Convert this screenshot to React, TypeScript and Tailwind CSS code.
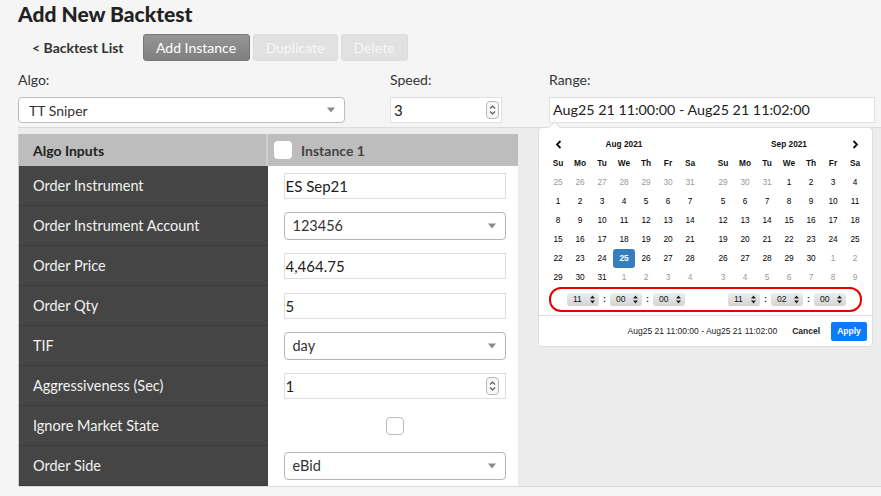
const sans = "font-['Lato','Noto_Sans',sans-serif]";
const cal = "font-['Liberation_Sans','Arial',sans-serif]";

type Field = { label: string; kind: "text" | "select" | "number" | "check"; value?: string };

const fields: Field[] = [
  { label: "Order Instrument", kind: "text", value: "ES Sep21" },
  { label: "Order Instrument Account", kind: "select", value: "123456" },
  { label: "Order Price", kind: "text", value: "4,464.75" },
  { label: "Order Qty", kind: "text", value: "5" },
  { label: "TIF", kind: "select", value: "day" },
  { label: "Aggressiveness (Sec)", kind: "number", value: "1" },
  { label: "Ignore Market State", kind: "check" },
  { label: "Order Side", kind: "select", value: "eBid" },
];

function Caret() {
  return (
    <svg width="10" height="6" viewBox="0 0 10 6" className="shrink-0">
      <path d="M1 0.5h8L5 5.5z" fill="#8a8a8a" />
    </svg>
  );
}

function Spinner() {
  return (
    <span className="flex h-[18px] w-[13px] flex-col items-center justify-center rounded-[4px] border border-[#b9b9b9] bg-[#f7f7f7]">
      <svg width="7" height="12" viewBox="0 0 7 12">
        <path d="M1 4.5L3.5 2L6 4.5M1 7.5L3.5 10L6 7.5" fill="none" stroke="#555" strokeWidth="1.1" />
      </svg>
    </span>
  );
}

function SelectBox({ value, className = "" }: { value: string; className?: string }) {
  return (
    <div
      className={`flex items-center justify-between rounded-[4px] border border-[#b4b4b4] bg-white pl-[8px] pr-[8px] text-[14.5px] text-[#333] ${className}`}
    >
      <span>{value}</span>
      <Caret />
    </div>
  );
}

function TimeSelect({ value }: { value: string }) {
  return (
    <div className="flex h-[13px] w-[32px] items-center justify-between rounded-[3px] bg-gradient-to-b from-[#ededed] to-[#d4d4d4] pl-[6px] pr-[4px] text-[8.5px] leading-none text-[#111]">
      <span>{value}</span>
      <svg width="5" height="9" viewBox="0 0 5 9">
        <path d="M0 3.5L2.5 0.5L5 3.5zM0 5.5L2.5 8.5L5 5.5z" fill="#222" />
      </svg>
    </div>
  );
}

function TimeGroup({ h, m, s }: { h: string; m: string; s: string }) {
  return (
    <div className="flex items-center gap-[4px]">
      <TimeSelect value={h} />
      <span className="text-[9px] font-bold text-[#222]">:</span>
      <TimeSelect value={m} />
      <span className="text-[9px] font-bold text-[#222]">:</span>
      <TimeSelect value={s} />
    </div>
  );
}

type Day = { d: number; off?: boolean; sel?: boolean };

const aug: Day[] = [
  ...[25, 26, 27, 28, 29, 30, 31].map((d) => ({ d, off: true })),
  ...Array.from({ length: 31 }, (_, i) => ({ d: i + 1, sel: i + 1 === 25 })),
  ...[1, 2, 3, 4].map((d) => ({ d, off: true })),
];

const sep: Day[] = [
  ...[29, 30, 31].map((d) => ({ d, off: true })),
  ...Array.from({ length: 30 }, (_, i) => ({ d: i + 1 })),
  ...[1, 2, 3, 4, 5, 6, 7, 8, 9].map((d) => ({ d, off: true })),
];

const dow = ["Su", "Mo", "Tu", "We", "Th", "Fr", "Sa"];

function Month({ title, days, left }: { title: string; days: Day[]; left: boolean }) {
  return (
    <div className="grid grid-cols-[repeat(7,22px)] auto-rows-[19px] text-[8.3px]">
      <div className="flex items-center justify-center">
        {left && (
          <svg width="7" height="9" viewBox="0 0 7 9">
            <path d="M5.5 1L2 4.5 5.5 8" fill="none" stroke="#111" strokeWidth="1.8" />
          </svg>
        )}
      </div>
      <div className="col-span-5 flex items-center justify-center font-bold text-[#111]">{title}</div>
      <div className="flex items-center justify-center">
        {!left && (
          <svg width="7" height="9" viewBox="0 0 7 9">
            <path d="M1.5 1L5 4.5 1.5 8" fill="none" stroke="#111" strokeWidth="1.8" />
          </svg>
        )}
      </div>
      {dow.map((d) => (
        <div key={d} className="flex items-center justify-center font-bold text-[#111]">
          {d}
        </div>
      ))}
      {days.map((x, i) => (
        <div
          key={i}
          className={`flex items-center justify-center ${
            x.sel
              ? "rounded-[3px] bg-[#357ebd] font-bold text-white"
              : x.off
                ? "text-[#999]"
                : "text-[#000]"
          }`}
        >
          {x.d}
        </div>
      ))}
    </div>
  );
}

function RangePicker() {
  return (
    <div className={`absolute left-[-11px] top-[58px] z-10 w-[335px] rounded-[4px] border border-[#ddd] bg-white ${cal}`}>
      <div className="absolute left-[11px] top-[-5px] h-[9px] w-[9px] rotate-45 border-l border-t border-[#ddd] bg-white" />
      <div className="flex gap-[11px] pl-[8px] pt-[7px]">
        <Month title="Aug 2021" days={aug} left />
        <Month title="Sep 2021" days={sep} left={false} />
      </div>
      <div className="mx-[10px] flex h-[25px] items-center justify-between rounded-[12px] border-2 border-[#e60000] pl-[16px] pr-[14px]">
        <TimeGroup h="11" m="00" s="00" />
        <TimeGroup h="11" m="02" s="00" />
      </div>
      <div className="mt-[3px] flex h-[31px] items-center justify-end border-t border-[#ddd] pr-[5px] text-[8.5px]">
        <span className="text-[#222]">Aug25 21 11:00:00 - Aug25 21 11:02:00</span>
        <span className="ml-[15px] font-bold text-[#222]">Cancel</span>
        <span className="ml-[11px] flex h-[19px] w-[36px] items-center justify-center rounded-[2px] bg-[#0a7cf9] font-bold text-white">
          Apply
        </span>
      </div>
    </div>
  );
}

function Control({ f }: { f: Field }) {
  if (f.kind === "select") return <SelectBox value={f.value!} className="h-[28px] w-[222px]" />;
  if (f.kind === "check")
    return (
      <div className="flex w-[222px] justify-center">
        <span className="h-[18px] w-[18px] rounded-[4px] border border-[#bbb] bg-white" />
      </div>
    );
  return (
    <div className="flex h-[26px] w-[222px] items-center justify-between border border-[#dedede] bg-white pl-[1px] pr-[6px] text-[15px] text-[#222]">
      <span>{f.value}</span>
      {f.kind === "number" && <Spinner />}
    </div>
  );
}

export default function App() {
  return (
    <div className={`h-[496px] w-[881px] overflow-hidden bg-[#f5f5f5] ${sans}`}>
      <h1 className="h-[28px] pl-[18px] pt-[1px] text-[21px] font-black leading-[26px] text-[#222]">Add New Backtest</h1>

      <div className="mt-[6px] flex h-[27px] items-center">
        <span className="pl-[32px] pr-[19px] text-[14px] font-bold text-[#333]">&lt; Backtest List</span>
        <button className="h-[27px] w-[107px] rounded-[3px] border border-[#777] bg-gradient-to-b from-[#959595] to-[#808080] text-[14px] text-white">
          Add Instance
        </button>
        <button className="ml-[3px] h-[27px] w-[85px] rounded-[3px] border border-[#dcdcdc] bg-[#e1e1e1] text-[14px] text-[#f7f7f7]">
          Duplicate
        </button>
        <button className="ml-[3px] h-[27px] w-[67px] rounded-[3px] border border-[#dcdcdc] bg-[#e1e1e1] text-[14px] text-[#f7f7f7]">
          Delete
        </button>
      </div>

      <div className="mt-[8px] flex text-[14px] text-[#333]">
        <div className="ml-[18px] w-[327px]">
          <div className="h-[28px] leading-[22px]">Algo:</div>
          <SelectBox value="TT Sniper" className="h-[26px] w-[327px] border-[#bdbdbd] pl-[10px] text-[14px]" />
        </div>
        <div className="ml-[45px] w-[112px]">
          <div className="h-[28px] leading-[22px]">Speed:</div>
          <div className="flex h-[26px] items-center justify-between border border-[#e0e0e0] bg-white pl-[3px] pr-[2px] text-[15px] text-[#222]">
            <span>3</span>
            <Spinner />
          </div>
        </div>
        <div className="relative z-10 ml-[47px] w-[326px]">
          <div className="h-[28px] leading-[22px]">Range:</div>
          <div className="flex h-[26px] items-center border border-[#e0e0e0] bg-white pl-[3px] text-[14.3px] text-[#222]">
            Aug25 21 11:00:00 - Aug25 21 11:02:00
          </div>
          <RangePicker />
        </div>
      </div>

      <div className="ml-[18px] mt-[4px] h-[360px] border-b border-t border-[#dcdcdc] bg-[#ececec] pt-[6px]">
        <div className="w-[500px] border-l border-[#ccc]">
          <div className="flex h-[32px] bg-[#bdbdbd] text-[14px] font-bold">
            <div className="flex w-[249px] items-center border-r-2 border-[#cfcfcf] pl-[14px] text-[#222]">Algo Inputs</div>
            <div className="flex items-center gap-[9px] pl-[6px] text-[#444]">
              <span className="h-[18px] w-[18px] rounded-[4px] bg-white" />
              Instance 1
            </div>
          </div>
          {fields.map((f) => (
            <div key={f.label} className="flex h-[40px]">
              <div className="flex w-[249px] items-center border-b border-[#3a3a3a] bg-[#454545] pl-[14px] text-[14.5px] text-[#f2f2f2]">
                {f.label}
              </div>
              <div className="flex w-[251px] items-center bg-white pl-[16px]">
                <Control f={f} />
              </div>
            </div>
          ))}
        </div>
      </div>
    </div>
  );
}
